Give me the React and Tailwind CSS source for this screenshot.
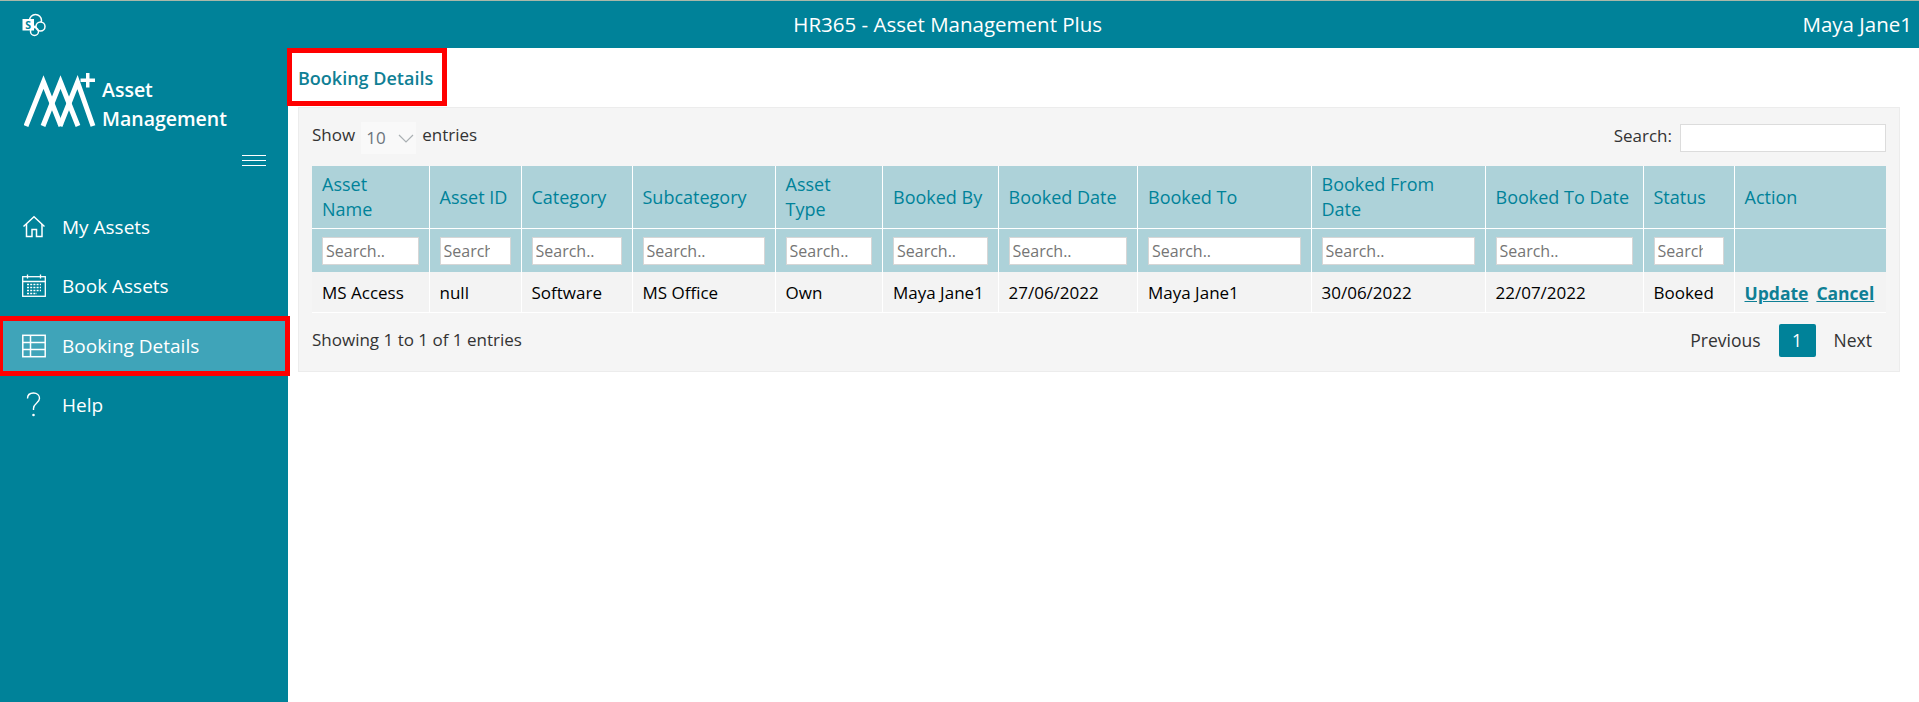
import React from 'react';

const columns = [
  { label: 'Asset Name', width: 117 },
  { label: 'Asset ID', width: 92 },
  { label: 'Category', width: 111 },
  { label: 'Subcategory', width: 143 },
  { label: 'Asset Type', width: 107.5 },
  { label: 'Booked By', width: 115.5 },
  { label: 'Booked Date', width: 139.5 },
  { label: 'Booked To', width: 173.5 },
  { label: 'Booked From Date', width: 174 },
  { label: 'Booked To Date', width: 158 },
  { label: 'Status', width: 91 },
  { label: 'Action', width: 152 },
];

const row = ['MS Access', 'null', 'Software', 'MS Office', 'Own', 'Maya Jane1', '27/06/2022', 'Maya Jane1', '30/06/2022', '22/07/2022', 'Booked'];

function SharePointLogo() {
  return (
    <svg width="24" height="24" viewBox="0 0 24 24" fill="none">
      <circle cx="13.500" cy="7.500" r="6" stroke="white" strokeWidth="1.500" />
      <circle cx="18.500" cy="13.500" r="4.500" stroke="white" strokeWidth="1.500" fill="#008299" />
      <circle cx="12.500" cy="18.500" r="4" stroke="white" strokeWidth="1.500" />
      <rect x="0.500" y="6" width="11.500" height="11.500" fill="white" />
      <text x="6.200" y="15.500" textAnchor="middle" fontSize="10.500" fontWeight="700" fill="#008299" fontFamily="'Open Sans', sans-serif">S</text>
    </svg>
  );
}

function AssetLogo() {
  return (
    <svg width="74" height="54" viewBox="0 0 74 54" fill="none" stroke="white" strokeWidth="5" strokeLinejoin="miter">
      <path d="M2 53 19.500 9 37 53" />
      <path d="M19 53 36.500 9 54 53" />
      <path d="M36 53 53.500 9 69 53" />
      <path d="M62 0h3.500v5.500H71V9h-5.500v5.500H62V9h-5.500V5.500H62z" fill="white" stroke="none" />
    </svg>
  );
}

function HomeIcon() {
  return (
    <svg width="24" height="24" viewBox="0 0 24 24" fill="none" stroke="white" strokeWidth="1.500">
      <path d="M1.500 11.500 12 1.800l10.500 9.700" />
      <path d="M4.500 9v12.500h5.500v-7h4.500v7h5.500V9" />
    </svg>
  );
}

function CalendarIcon() {
  return (
    <svg width="24" height="24" viewBox="0 0 24 24" fill="none" stroke="white" strokeWidth="1.300">
      <rect x="0.700" y="2.700" width="22.600" height="19.600" />
      <path d="M0.700 7.500h22.600M5.500 0.500v4M18.500 0.500v4" />
      <path d="M5 10.500h14M5 13.500h14M5 16.500h14M5 19.500h10" strokeDasharray="2 1.200" />
    </svg>
  );
}

function TableIcon() {
  return (
    <svg width="24" height="24" viewBox="0 0 24 24" fill="none" stroke="white" strokeWidth="1.500">
      <rect x="0.800" y="1.300" width="22.400" height="21.400" />
      <path d="M0.800 8.500h22.400M0.800 15.500h22.400M8.500 1.300v21.400" />
    </svg>
  );
}

function HelpIcon() {
  return (
    <svg width="24" height="26" viewBox="0 0 24 26" fill="none" stroke="white" strokeWidth="1.400">
      <path d="M5.500 6.500C5.500 3 8 1 11.500 1s6 2.200 6 5.200c0 2.400-1.300 3.600-3 5-1.800 1.500-3 2.700-3 5.300v1.500" />
      <circle cx="11.500" cy="23" r="0.600" fill="white" />
    </svg>
  );
}

const navItems = [
  { label: 'My Assets', icon: <HomeIcon /> },
  { label: 'Book Assets', icon: <CalendarIcon /> },
  { label: 'Booking Details', icon: <TableIcon />, active: true },
  { label: 'Help', icon: <HelpIcon /> },
];

export default function App() {
  return (
    <div className="flex h-screen flex-col overflow-hidden bg-white font-['Open_Sans',sans-serif] text-[17px] text-[#333]">
      {/* Top bar */}
      <header className="flex h-12 shrink-0 items-center justify-between border-t border-[#a9b8a9] bg-[#008299] text-white">
        <div className="w-[93px] pl-[22px]">
          <SharePointLogo />
        </div>
        <div className="text-[20.500px]">HR365 - Asset Management Plus</div>
        <div className="pr-[7px] text-[20.500px]">Maya Jane1</div>
      </header>

      <div className="flex min-h-0 flex-1">
        {/* Sidebar */}
        <aside className="w-[288px] shrink-0 bg-[#008299] text-white">
          <div className="mt-[25px] flex h-[54px] items-end pl-6">
            <AssetLogo />
            <div className="-mb-[6px] ml-[4px] text-[19.500px] font-semibold leading-[29px]">
              <div>Asset</div>
              <div>Management</div>
            </div>
          </div>
          <div className="flex justify-end pr-[22px] pt-[28px]">
            <div className="flex w-6 flex-col gap-1">
              <div className="h-px bg-white" />
              <div className="h-px bg-white" />
              <div className="h-px bg-white" />
            </div>
          </div>
          <nav className="mt-[31px]">
            {navItems.map((item) => (
              <div
                key={item.label}
                className={`relative flex h-[59.500px] items-center gap-4 pl-[22px] text-[19px] ${item.active ? 'bg-[#3fa4b9]' : ''}`}
              >
                {item.icon}
                <span>{item.label}</span>
                {item.active && <div className="absolute -right-[2px] bottom-0 left-0 top-0 border-[5px] border-l-[3px] border-[#ff0000]" />}
              </div>
            ))}
          </nav>
        </aside>

        {/* Content */}
        <main className="min-w-0 flex-1">
          <div className="relative flex h-[59px] items-center pl-[10px] pt-[1px]">
            <h2 className="text-[18px] font-semibold text-[#0f7f95]">Booking Details</h2>
            <div className="absolute left-[-1px] top-0 h-[58px] w-[160px] border-[5px] border-[#ff0000]" />
          </div>

          <section className="ml-[10px] mr-[19px] border border-[#ececec] bg-[#f5f5f5] px-[13px] pb-[14px] pt-[14px]">
            <div className="flex items-center justify-between">
              <div className="flex items-center gap-[6px]">
                <span className="mb-[6px]">Show</span>
                <div className="flex h-8 w-[55px] items-center justify-between bg-[#f9f9f9] pl-[5px] pr-[2px] text-[#6c757d]">
                  <span>10</span>
                  <svg width="16" height="9" viewBox="0 0 16 9" fill="none" stroke="#aab0b3" strokeWidth="1.200">
                    <path d="M1 1l7 7 7-7" />
                  </svg>
                </div>
                <span className="mb-[6px]">entries</span>
              </div>
              <div className="flex items-center gap-2">
                <span className="mb-[5px]">Search:</span>
                <input aria-label="Search" className="h-7 w-[206px] border border-[#dcdcdc] bg-white outline-none" />
              </div>
            </div>

            <table className="mt-3 table-fixed border-collapse" style={{ width: 1574 }}>
              <colgroup>
                {columns.map((col) => (
                  <col key={col.label} style={{ width: col.width }} />
                ))}
              </colgroup>
              <thead>
                <tr className="h-[62px] bg-[#add2d9] text-left text-[#008299]">
                  {columns.map((col) => (
                    <th key={col.label} className="border-x border-b border-white px-[10px] pt-[1px] text-[18px] font-normal leading-[25px] first:border-l-0 last:border-r-0">
                      {col.label}
                    </th>
                  ))}
                </tr>
                <tr className="h-[44px] bg-[#add2d9]">
                  {columns.map((col, i) => (
                    <th key={col.label} className="border-x border-white px-[10px] pt-[2px] font-normal first:border-l-0 last:border-r-0">
                      {i < 11 && (
                        <input
                          placeholder="Search.."
                          className="block h-7 w-full border border-[#d6d6d6] bg-white pl-[3px] pr-5 text-[16px] outline-none placeholder:text-[#757575]"
                        />
                      )}
                    </th>
                  ))}
                </tr>
              </thead>
              <tbody>
                <tr className="h-[40px] border-b border-white bg-[#f3f3f3] text-black">
                  {row.map((cell, i) => (
                    <td key={i} className="border-x border-white px-[10px] pt-[2px] first:border-l-0">
                      {cell}
                    </td>
                  ))}
                  <td className="whitespace-nowrap border-l border-white pl-[10px] pt-[2px] text-[17.500px] font-bold text-[#0f7f95]">
                    <a className="underline">Update</a>
                    <a className="ml-2 underline">Cancel</a>
                  </td>
                </tr>
              </tbody>
            </table>

            <div className="mt-[11px] flex items-center justify-between">
              <div>Showing 1 to 1 of 1 entries</div>
              <div className="flex items-center text-[17.500px]">
                <span className="mr-[18px]">Previous</span>
                <span className="flex h-[33px] w-[37px] items-center justify-center rounded-[2px] bg-[#008299] text-white">1</span>
                <span className="ml-[18px] mr-[14px]">Next</span>
              </div>
            </div>
          </section>
        </main>
      </div>
    </div>
  );
}
